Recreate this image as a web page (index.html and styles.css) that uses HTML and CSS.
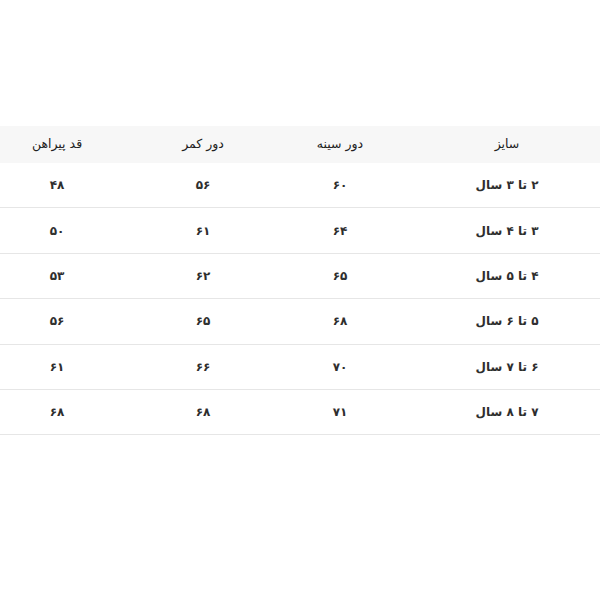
FILE: index.html
```html
<!DOCTYPE html>
<html lang="fa" dir="rtl">
<head>
<meta charset="utf-8">
<link rel="stylesheet" href="styles.css">
</head>
<body>
<div class="size-table">
  <div class="row head">
    <div class="cell c1">سایز</div>
    <div class="cell c2">دور سینه</div>
    <div class="cell c3">دور کمر</div>
    <div class="cell c4">قد پیراهن</div>
  </div>
  <div class="row">
    <div class="cell c1">۲ تا ۳ سال</div>
    <div class="cell c2">۶۰</div>
    <div class="cell c3">۵۶</div>
    <div class="cell c4">۴۸</div>
  </div>
  <div class="row">
    <div class="cell c1">۳ تا ۴ سال</div>
    <div class="cell c2">۶۴</div>
    <div class="cell c3">۶۱</div>
    <div class="cell c4">۵۰</div>
  </div>
  <div class="row">
    <div class="cell c1">۴ تا ۵ سال</div>
    <div class="cell c2">۶۵</div>
    <div class="cell c3">۶۲</div>
    <div class="cell c4">۵۳</div>
  </div>
  <div class="row">
    <div class="cell c1">۵ تا ۶ سال</div>
    <div class="cell c2">۶۸</div>
    <div class="cell c3">۶۵</div>
    <div class="cell c4">۵۶</div>
  </div>
  <div class="row">
    <div class="cell c1">۶ تا ۷ سال</div>
    <div class="cell c2">۷۰</div>
    <div class="cell c3">۶۶</div>
    <div class="cell c4">۶۱</div>
  </div>
  <div class="row">
    <div class="cell c1">۷ تا ۸ سال</div>
    <div class="cell c2">۷۱</div>
    <div class="cell c3">۶۸</div>
    <div class="cell c4">۶۸</div>
  </div>
</div>
</body>
</html>
```

FILE: styles.css
```css
html, body {
  margin: 0;
  padding: 0;
  background: #ffffff;
}
body {
  font-family: "DejaVu Sans", "Noto Sans", sans-serif;
  color: #2e2e2e;
}
.size-table {
  margin-top: 126px;
  width: 600px;
  direction: rtl;
}
.row {
  display: grid;
  grid-template-columns: 212px 96px 178px 114px;
  height: 45.4px;
  box-sizing: border-box;
  border-bottom: 1px solid #e6e6e6;
  align-items: center;
  font-size: 12px;
  font-weight: bold;
}
.row.head {
  height: 37px;
  background: #f7f7f7;
  border-bottom: none;
  font-weight: normal;
  font-size: 12.5px;
  color: #222222;
  padding-bottom: 3px;
}
.cell {
  text-align: center;
  white-space: nowrap;
}
.c1 {
  padding-left: 26px;
}
```
